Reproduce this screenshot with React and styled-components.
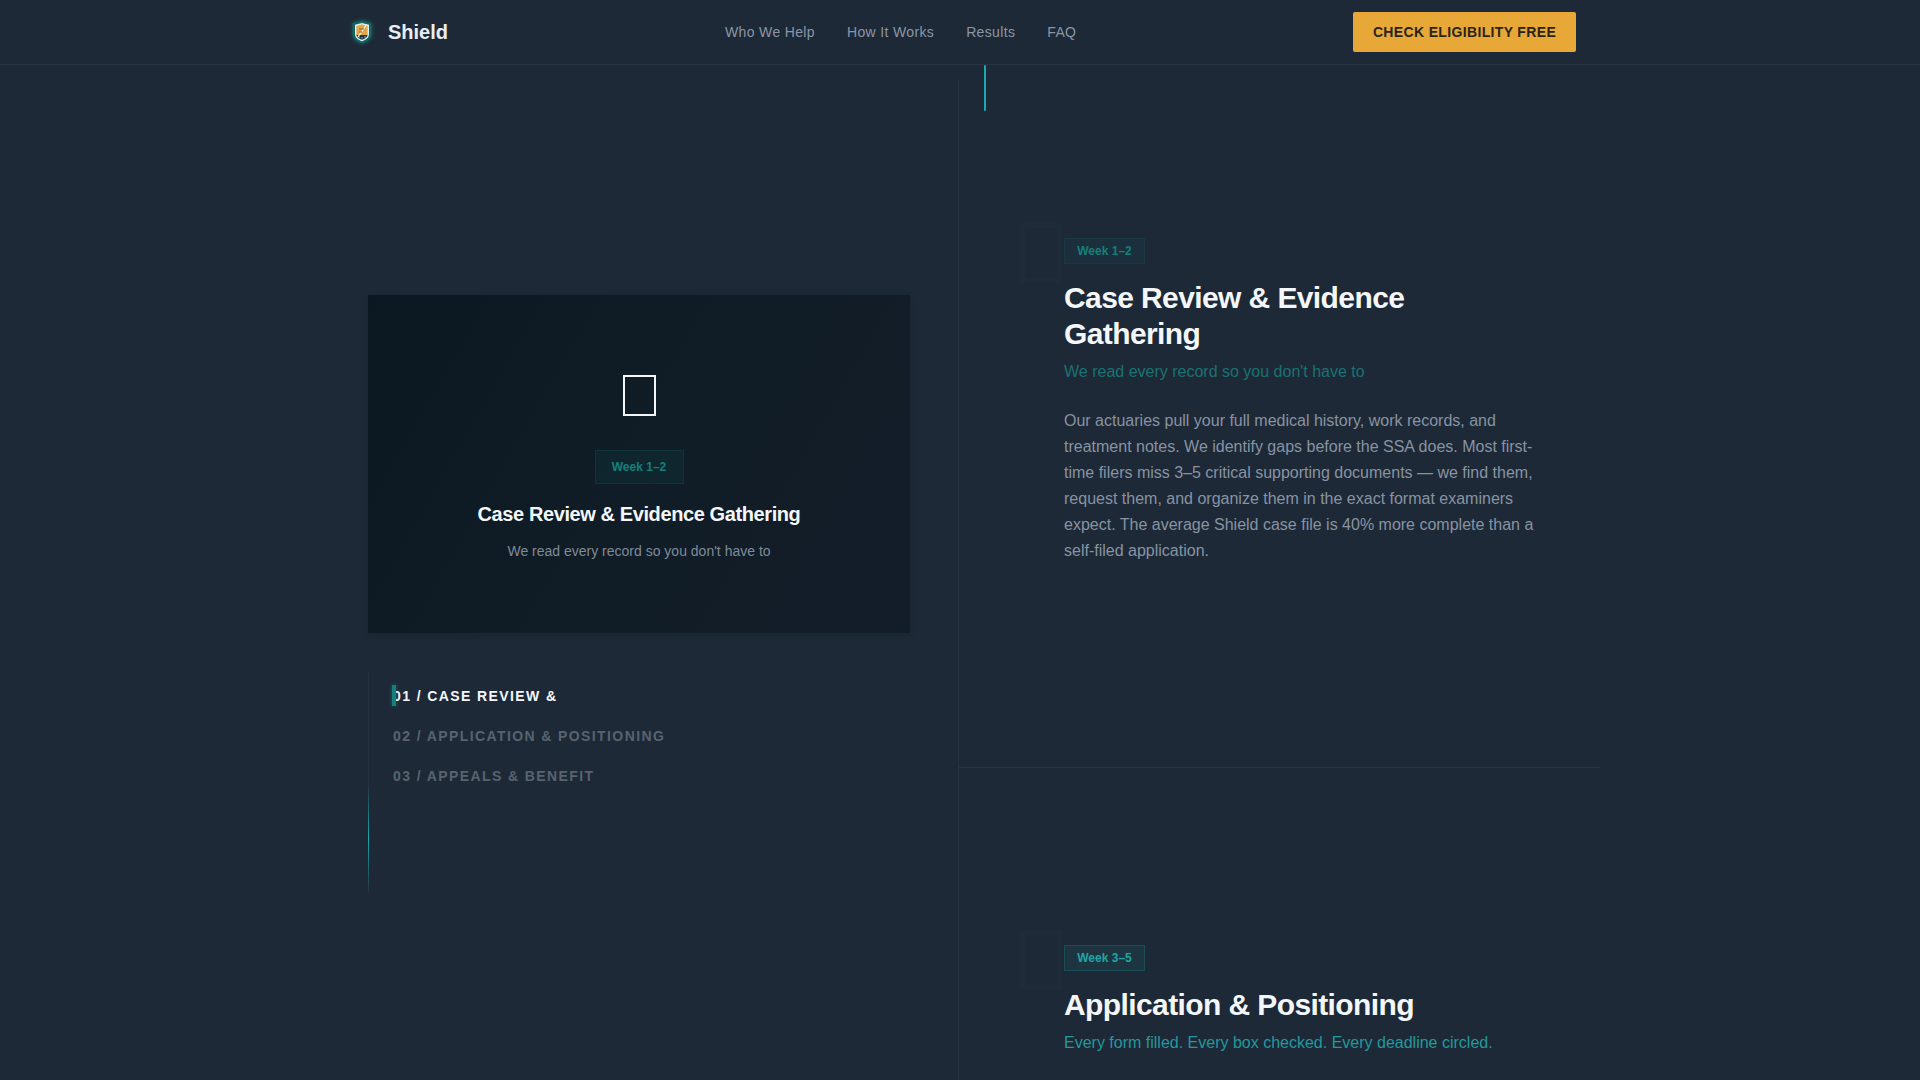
import React from 'react';
import styled, { createGlobalStyle } from 'styled-components';

const GlobalStyle = createGlobalStyle`
  html, body {
    margin: 0;
    height: 100%;
    overflow: hidden;
    background: #1e2937;
    font-family: "Liberation Sans", Arial, sans-serif;
  }
  * { box-sizing: border-box; }
`;

const Header = styled.header`
  height: 65px;
  border-bottom: 1px solid rgba(255, 255, 255, 0.05);
`;

const HeaderInner = styled.div`
  max-width: 1280px;
  height: 64px;
  margin: 0 auto;
  padding: 0 24px 0 32px;
  display: flex;
  align-items: center;
`;

const Brand = styled.a`
  display: flex;
  align-items: center;
  gap: 16px;
  width: 373px;
  font-size: 20px;
  font-weight: 700;
  color: #e8eef4;
`;

const NavLinks = styled.nav`
  display: flex;
  gap: 32px;
  flex: 1;
`;

const NavLink = styled.a`
  font-size: 14px;
  letter-spacing: 0.35px;
  color: #8a96a6;
`;

const CtaButton = styled.button`
  width: 223px;
  height: 40px;
  border: 0;
  border-radius: 2px;
  background: #e8a838;
  color: #2a2418;
  font: 700 14px "Liberation Sans", Arial, sans-serif;
  letter-spacing: 0.35px;
`;

const Main = styled.main`
  max-width: 1280px;
  margin: 0 auto;
  display: flex;
  height: calc(100vh - 65px);
`;

const Aside = styled.aside`
  width: 639px;
  margin-top: 15px;
  padding: 215px 48px 0;
  border-right: 1px solid rgba(255, 255, 255, 0.04);
`;

const Card = styled.div`
  height: 338px;
  padding-top: 80px;
  display: flex;
  flex-direction: column;
  align-items: center;
  background: linear-gradient(120deg, #0b1821 0%, #101c26 50%, #131d29 100%);
  box-shadow: 0 2px 6px rgba(10, 20, 30, 0.18);
`;

const MissingGlyph = styled.span`
  width: 33px;
  height: 41px;
  border: 2px solid #f4f7fa;
`;

const CardBadge = styled.span`
  margin-top: 34px;
  width: 89px;
  height: 34px;
  display: flex;
  align-items: center;
  justify-content: center;
  font-size: 12px;
  font-weight: 700;
  color: #14807c;
  background: rgba(20, 130, 125, 0.1);
  border: 1px solid rgba(20, 130, 125, 0.16);
`;

const CardTitle = styled.h3`
  margin: 17px 0 0;
  font-size: 20px;
  line-height: 26px;
  font-weight: 700;
  letter-spacing: -0.4px;
  color: #f4f7fa;
`;

const CardText = styled.p`
  margin: 14px 0 0;
  font-size: 14px;
  line-height: 20px;
  color: #7f8b9a;
`;

const StepList = styled.ul`
  position: relative;
  list-style: none;
  margin: 39px 0 0;
  padding: 4px 0 0 24px;
  height: 221px;
  border-left: 1px solid rgba(255, 255, 255, 0.04);

  &::after {
    content: '';
    position: absolute;
    left: -1px;
    top: 111px;
    width: 1px;
    height: 110px;
    background: linear-gradient(180deg, transparent, #1ba8b0 50%, transparent);
  }
`;

const StepItem = styled.li`
  position: relative;
  height: 40px;
  line-height: 40px;
  font-size: 14px;
  font-weight: 700;
  letter-spacing: 1.4px;
  color: ${props => (props.$active ? '#f4f7fa' : '#58636f')};

  &::before {
    content: '';
    display: ${props => (props.$active ? 'block' : 'none')};
    position: absolute;
    left: -1px;
    top: 9px;
    width: 4px;
    height: 21px;
    background: #14807c;
    box-shadow: 0 0 4px rgba(27, 168, 176, 0.4);
  }
`;

const Content = styled.div`
  position: relative;
  width: 641px;
`;

const ScrollMark = styled.span`
  position: absolute;
  left: 25px;
  top: 0;
  width: 2px;
  height: 46px;
  border-radius: 1px;
  background: #1ba8b0;
`;

const Section = styled.section`
  height: ${props => props.$height};
  padding: ${props => props.$top} 56px 0 105px;
  border-bottom: ${props => (props.$divider ? '1px solid rgba(255, 255, 255, 0.05)' : '0')};
`;

const SectionHead = styled.div`
  position: relative;
`;

const GhostGlyph = styled.span`
  position: absolute;
  left: -44px;
  top: -15px;
  width: 42px;
  height: 60px;
  border: 5px solid rgba(27, 168, 176, 0.025);
  filter: blur(1px);
`;

const Badge = styled.span`
  display: block;
  width: 81px;
  height: 26px;
  line-height: 24px;
  text-align: center;
  font-size: 12px;
  font-weight: 700;
  color: ${props => (props.$dim ? '#158078' : '#22a5a5')};
  background: rgba(20, 130, 125, ${props => (props.$dim ? 0.07 : 0.15)});
  border: 1px solid rgba(20, 130, 125, ${props => (props.$dim ? 0.1 : 0.3)});
`;

const Heading = styled.h2`
  margin: 16px 0 0;
  font-size: 30px;
  line-height: 36px;
  font-weight: 700;
  letter-spacing: -0.6px;
  color: #f4f7fa;
`;

const Subhead = styled.p`
  margin: 8px 0 0;
  font-size: 16px;
  line-height: 24px;
  color: ${props => (props.$dim ? '#1a7272' : '#22999d')};
`;

const Body = styled.p`
  margin: 24px 0 0;
  font-size: 16px;
  line-height: 26px;
  color: #8793a3;
`;

const LogoMark = styled.svg`
  filter: drop-shadow(0 0 2px rgba(30, 160, 150, 0.5));
`;

function ShieldLogo() {
  return (
    <LogoMark width="20" height="24" viewBox="0 0 20 24" fill="none">
      <path d="M10 0.5 L19.5 3 V14 C19.5 19 15 22 10 23.5 C5 22 0.5 19 0.5 14 V3 Z" fill="#14655f" />
      <path d="M10 3 L17 4.8 V14 C17 17.8 13.8 20 10 21.2 C6.2 20 3 17.8 3 14 V4.8 Z" fill="#dfeef0" />
      <path d="M10 4.5 L15.6 6 V15 H4.4 V6 Z" fill="#e3a548" />
      <path d="M4.4 15 H15.6 C15.2 17.6 12.8 19 10 19.8 C7.2 19 4.8 17.6 4.4 15 Z" fill="#1d3b42" />
      <path d="M14 5.5 L6 17" stroke="#f4f7fa" strokeWidth="1.3" />
      <path d="M7.2 9 H12 M7.2 12 H10" stroke="#8a5f22" strokeWidth="1" />
      <path d="M6.5 17 H7.5 M9.5 18 H10.5 M12.5 17 H13.5" stroke="#f4f7fa" strokeWidth="1" />
    </LogoMark>
  );
}

export default function App() {
  return (
    <>
      <GlobalStyle />
      <Header>
        <HeaderInner>
          <Brand>
            <ShieldLogo />
            Shield
          </Brand>
          <NavLinks>
            <NavLink>Who We Help</NavLink>
            <NavLink>How It Works</NavLink>
            <NavLink>Results</NavLink>
            <NavLink>FAQ</NavLink>
          </NavLinks>
          <CtaButton>CHECK ELIGIBILITY FREE</CtaButton>
        </HeaderInner>
      </Header>
      <Main>
        <Aside>
          <Card>
            <MissingGlyph />
            <CardBadge>Week 1–2</CardBadge>
            <CardTitle>Case Review &amp; Evidence Gathering</CardTitle>
            <CardText>We read every record so you don't have to</CardText>
          </Card>
          <StepList>
            <StepItem $active>01 / CASE REVIEW &amp;</StepItem>
            <StepItem>02 / APPLICATION &amp; POSITIONING</StepItem>
            <StepItem>03 / APPEALS &amp; BENEFIT</StepItem>
          </StepList>
        </Aside>
        <Content>
          <ScrollMark />
          <Section $height="703px" $top="173px" $divider>
            <SectionHead>
              <GhostGlyph />
              <Badge $dim>Week 1–2</Badge>
            </SectionHead>
            <Heading>Case Review &amp; Evidence Gathering</Heading>
            <Subhead $dim>We read every record so you don't have to</Subhead>
            <Body>
              Our actuaries pull your full medical history, work records, and treatment notes. We
              identify gaps before the SSA does. Most first-time filers miss 3–5 critical supporting
              documents — we find them, request them, and organize them in the exact format examiners
              expect. The average Shield case file is 40% more complete than a self-filed application.
            </Body>
          </Section>
          <Section $height="312px" $top="177px">
            <SectionHead>
              <GhostGlyph />
              <Badge>Week 3–5</Badge>
            </SectionHead>
            <Heading>Application &amp; Positioning</Heading>
            <Subhead>Every form filled. Every box checked. Every deadline circled.</Subhead>
          </Section>
        </Content>
      </Main>
    </>
  );
}
